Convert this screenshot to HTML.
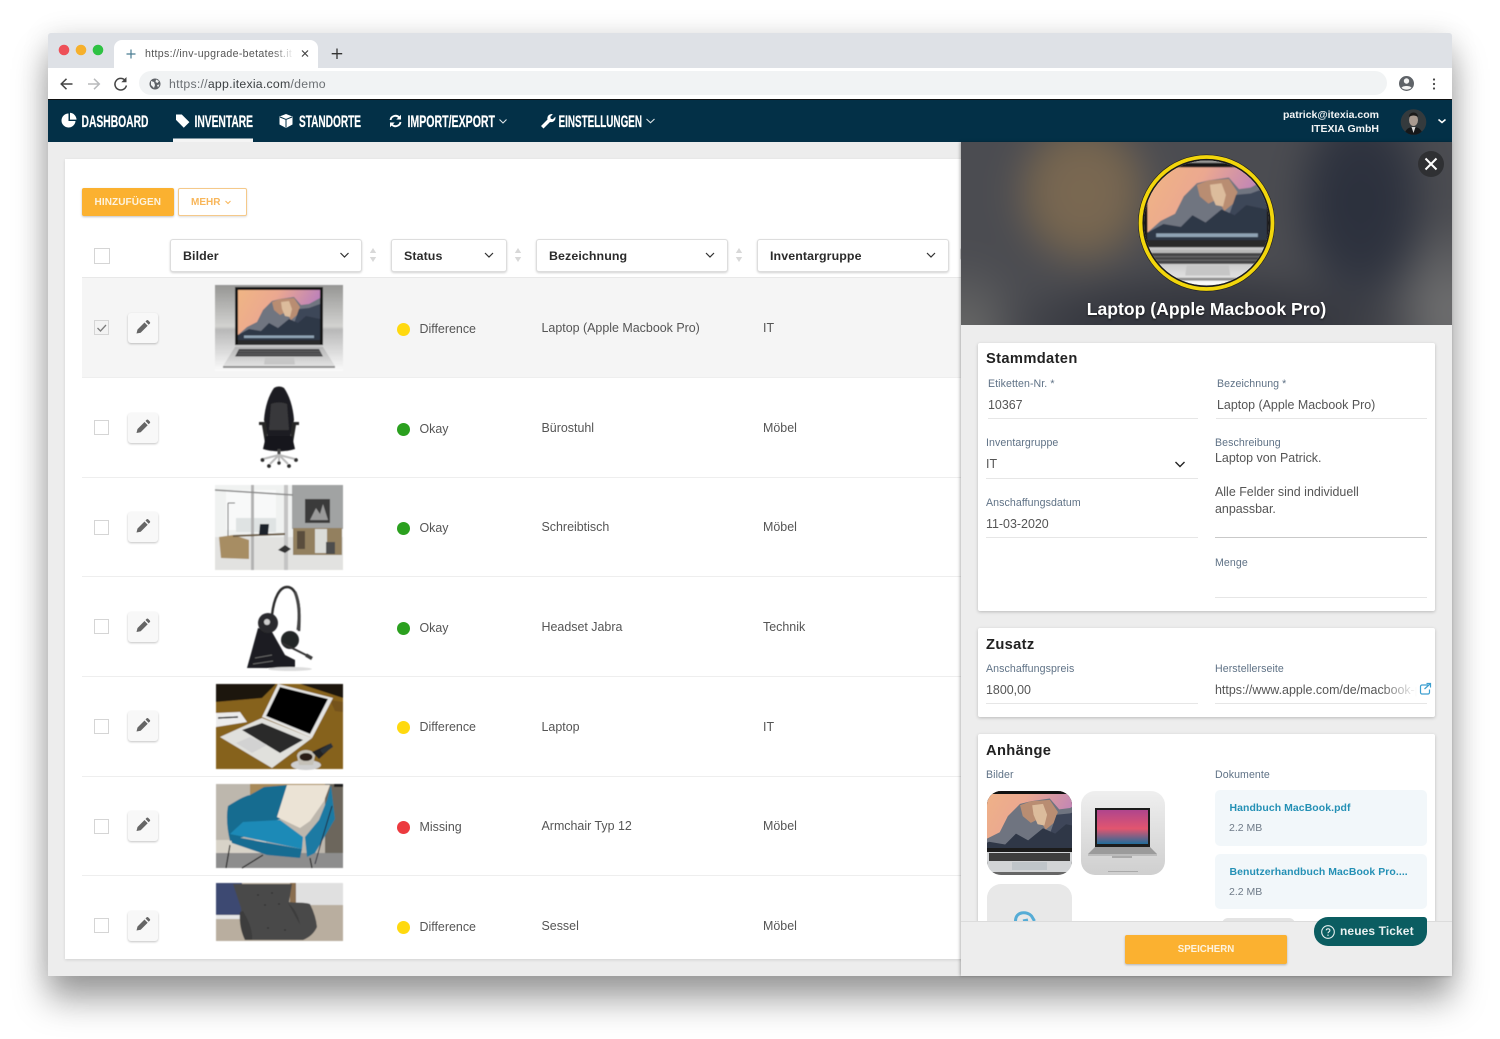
<!DOCTYPE html>
<html lang="de"><head><meta charset="utf-8"><title>ITEXIA</title>
<style>
html,body{margin:0;padding:0;background:#fff;width:1500px;height:1039px;overflow:hidden}
body{position:relative;font-family:"Liberation Sans",sans-serif;color:#4d4d4d}
.a{position:absolute}
.t{position:absolute;white-space:nowrap;line-height:16px;height:16px}
#win{position:absolute;left:48px;top:33px;width:1404px;height:943px;background:#ededed;box-shadow:0 24px 34px rgba(0,0,0,.36),0 2px 28px rgba(0,0,0,.12);border-radius:3px 3px 0 0}
.row{position:absolute;left:82px;width:879px;height:99px;border-bottom:1px solid #eee;box-sizing:border-box}
.cb{position:absolute;left:94px;width:15px;height:15px;border:1px solid #d5d5d5;background:#fff;box-sizing:border-box}
.eb{position:absolute;left:128px;width:30px;height:30px;background:#f8f8f8;border-radius:3px;box-shadow:0 1px 2px rgba(0,0,0,.24)}
.dot{position:absolute;left:396.500px;width:13px;height:13px;border-radius:50%}
.c{font-size:12.450px;color:#555}
.sel{position:absolute;top:238.500px;height:33px;background:#fff;border:1px solid #ddd;border-radius:3px;box-sizing:border-box;box-shadow:0 1px 2px rgba(0,0,0,.18)}
.sel b{position:absolute;left:12px;top:8px;font-size:12.400px;letter-spacing:.1px;color:#2b2b2b;line-height:16px}
.card{position:absolute;left:978px;width:457px;background:#fff;border-radius:2px;box-shadow:0 1px 3px rgba(0,0,0,.22)}
.h{font-weight:bold;color:#222;letter-spacing:.35px}
.l{font-size:10.600px;color:#5f7286;letter-spacing:.08px}
.v{font-size:12.450px;color:#555}
.ln{position:absolute;height:1px;background:#e6e6e6}
.doc{position:absolute;left:1215px;width:212px;background:#f2f7fa;border-radius:5px}
.dn{font-size:10.450px;font-weight:bold;color:#2490b5;letter-spacing:.08px}
.ds{font-size:10.500px;color:#6f7b88}
</style></head><body>
<div id="win"></div>

<!-- browser chrome -->
<div class="a" style="left:48px;top:33px;width:1404px;height:35px;background:#dee1e6;border-radius:3px 3px 0 0"></div>
<div class="a" style="left:48px;top:68px;width:1404px;height:31px;background:#fff"></div>
<div class="a" style="left:139px;top:71px;width:1248px;height:24px;background:#f1f3f4;border-radius:12px"></div>
<div class="a" style="left:114px;top:40px;width:204px;height:28px;background:#fff;border-radius:8px 8px 0 0"></div>
<div class="t" style="left:145px;top:46px;width:147px;overflow:hidden;font-size:10.600px;letter-spacing:.32px;color:#555">https://inv-upgrade-betatest.it</div>
<div class="a" style="left:272px;top:46px;width:22px;height:16px;background:linear-gradient(90deg,rgba(255,255,255,0),#fff)"></div>
<div class="t" style="left:169px;top:76px;font-size:12.300px;letter-spacing:.24px;color:#6b6f73">https://<span style="color:#3c4043">app.itexia.com</span>/demo</div>

<svg class="a" style="left:0;top:0" width="1500" height="142" viewBox="0 0 1500 142" fill="none">
<circle cx="64" cy="50" r="5.300" fill="#ee5058"/><circle cx="81" cy="50" r="5.300" fill="#f6b02c"/><circle cx="98" cy="50" r="5.300" fill="#2ec243"/>
<path d="M131 49.500v9M126.500 54h9" stroke="#4a7d92" stroke-width="1.200"/>
<path d="M302 50.500l6 6M308 50.500l-6 6" stroke="#444" stroke-width="1.200"/>
<path d="M337 48.500v10.500M331.700 53.700h10.500" stroke="#333" stroke-width="1.300"/>
<path d="M72.500 84H61.500M66.500 78.800L61.200 84l5.300 5.200" stroke="#444" stroke-width="1.500"/>
<path d="M88 84H99M94 78.800L99.300 84 94 89.200" stroke="#b8babc" stroke-width="1.500"/>
<path d="M125.200 80.500a5.800 5.800 0 1 0 1.200 5" stroke="#444" stroke-width="1.500"/><path d="M126.500 77v5.200h-5.200z" fill="#444"/>
<circle cx="155" cy="84" r="5.500" fill="#5f6368"/><path d="M151 81l3 1 1 3-1 3-3-3zM156 79.500l3 1.500-1.500 2-2-1zM157 85l2.500-.5-1.500 3z" fill="#f1f3f4"/>
<circle cx="1406.500" cy="83.500" r="7.500" fill="#5f6368"/><circle cx="1406.500" cy="81" r="2.700" fill="#f4f4f4"/><path d="M1401.500 87.700c1.500-2.300 8.500-2.300 10 0-2.500 2.500-7.500 2.500-10 0z" fill="#f4f4f4"/>
<circle cx="1434" cy="79.500" r="1.100" fill="#444"/><circle cx="1434" cy="84" r="1.100" fill="#444"/><circle cx="1434" cy="88.500" r="1.100" fill="#444"/>
<rect x="48" y="99" width="1404" height="43" fill="#033047"/>
<rect x="48" y="99" width="1404" height="1" fill="#111"/>
<rect x="173" y="138.500" width="80" height="3.500" fill="#f4f4f4"/>
<g fill="#fff" stroke="#fff" stroke-width=".25" font-family="Liberation Sans, sans-serif" font-weight="bold" font-size="16.500">
<text x="81.500" y="127" textLength="67" lengthAdjust="spacingAndGlyphs">DASHBOARD</text>
<text x="194.500" y="127" textLength="58.500" lengthAdjust="spacingAndGlyphs">INVENTARE</text>
<text x="299" y="127" textLength="62" lengthAdjust="spacingAndGlyphs">STANDORTE</text>
<text x="407.500" y="127" textLength="87.500" lengthAdjust="spacingAndGlyphs">IMPORT/EXPORT</text>
<text x="558.500" y="127" textLength="83.500" lengthAdjust="spacingAndGlyphs">EINSTELLUNGEN</text>
</g>
<path d="M68.500 113.500a7 7 0 1 0 7 7.500h-7z" fill="#fff"/><path d="M70 112.800a7 7 0 0 1 6.500 6.800H70z" fill="#fff"/>
<path d="M176 114.500h5.800l7.600 7.600-5.600 5.600-7.800-7.800z" fill="#fff"/>
<path d="M286 114l6.500 2.500v8L286 128l-6.500-3.500v-8z" fill="#fff"/><path d="M280 117l6 2.500 6-2.500M286 119.500v8" stroke="#033047" stroke-width="1"/>
<path d="M390.500 120a5 5 0 0 1 8.700-2.500M400.500 122a5 5 0 0 1-8.700 2.500" stroke="#fff" stroke-width="1.900"/><path d="M401 114.800v4.700h-4.700zM390 127.200v-4.700h4.700z" fill="#fff"/>
<path d="M541 126l6.500-6.500a4.300 4.300 0 0 1 5.300-5.300l-2.500 2.500.5 2 2 .5 2.500-2.500a4.300 4.300 0 0 1-5.300 5.300l-6.500 6.500z" fill="#fff"/>
<path d="M499.500 119.500l3.500 3.500 3.500-3.500M646.500 119l4 3.800 4-3.800" stroke="#dfe5e8" stroke-width="1.100"/>
<path d="M1438.500 119.500l3.500 3 3.500-3" stroke="#fff" stroke-width="1.500"/>
<defs><clipPath id="av"><circle cx="1413.500" cy="122" r="12.800"/></clipPath></defs>
<g clip-path="url(#av)"><rect x="1400" y="108" width="27" height="28" fill="#343a3d"/><ellipse cx="1413.500" cy="120" rx="4.500" ry="6" fill="#a89a90"/><path d="M1409 117c0-6 9-6 9 0-3-2-6-2-9 0z" fill="#1a1a1a"/><path d="M1404 136c1-7 5-9 9.500-9s8.500 2 9.500 9z" fill="#151719"/><path d="M1411.500 127h4l-2 6z" fill="#d8d8d8"/></g>
</svg>
<div class="t" style="right:121px;top:106.500px;font-size:10.500px;font-weight:bold;color:#f2f4f5">patrick@itexia.com</div>
<div class="t" style="right:121px;top:120.500px;font-size:10.500px;font-weight:bold;color:#f2f4f5">ITEXIA GmbH</div>

<!-- main card -->
<div class="a" style="left:65px;top:159px;width:900px;height:800px;background:#fff;box-shadow:0 1px 3px rgba(0,0,0,.12)"></div>
<div class="a" style="left:82px;top:187.500px;width:92px;height:28.500px;background:#fbb130;border-radius:2px;box-shadow:0 1px 2px rgba(0,0,0,.25)"></div>
<div class="t" style="left:94.500px;top:195px;font-size:10px;font-weight:bold;color:#fdf3df;letter-spacing:.1px">HINZUFÜGEN</div>
<div class="a" style="left:178px;top:187.500px;width:69px;height:28.500px;background:#fff;border:1px solid #f5c98a;border-radius:2px;box-sizing:border-box;box-shadow:0 1px 2px rgba(0,0,0,.14)"></div>
<div class="t" style="left:191px;top:195px;font-size:10px;font-weight:bold;color:#f8b65a">MEHR</div>

<div class="cb" style="top:247.500px;width:16px;height:16px"></div>
<div class="sel" style="left:170px;width:192px"><b>Bilder</b></div>
<div class="sel" style="left:391px;width:116px"><b>Status</b></div>
<div class="sel" style="left:536px;width:192px"><b>Bezeichnung</b></div>
<div class="sel" style="left:757px;width:192px"><b>Inventargruppe</b></div>

<!-- rows -->
<div class="row" style="top:277px;background:#f5f5f5;border-top:1px solid #e8e8e8;height:101px"></div>
<div class="row" style="top:378px;height:100px"></div>
<div class="row" style="top:478px"></div>
<div class="row" style="top:577px;height:100px"></div>
<div class="row" style="top:677px;height:100px"></div>
<div class="row" style="top:777px"></div>

<div class="cb" style="top:320px;background:#f3f3f3"></div>
<div class="cb" style="top:420px"></div><div class="cb" style="top:519.500px"></div><div class="cb" style="top:619px"></div><div class="cb" style="top:719px"></div><div class="cb" style="top:818.500px"></div><div class="cb" style="top:918px"></div>
<div class="eb" style="top:313px"></div><div class="eb" style="top:413px"></div><div class="eb" style="top:512px"></div><div class="eb" style="top:612px"></div><div class="eb" style="top:711px"></div><div class="eb" style="top:811px"></div><div class="eb" style="top:910.500px"></div>

<div class="dot" style="top:322.500px;background:#ffd90f"></div><div class="t c" style="left:419.500px;top:320.500px">Difference</div>
<div class="dot" style="top:422.500px;background:#2ba01f"></div><div class="t c" style="left:419.500px;top:420.500px">Okay</div>
<div class="dot" style="top:522px;background:#2ba01f"></div><div class="t c" style="left:419.500px;top:520px">Okay</div>
<div class="dot" style="top:621.500px;background:#2ba01f"></div><div class="t c" style="left:419.500px;top:619.500px">Okay</div>
<div class="dot" style="top:721px;background:#ffd90f"></div><div class="t c" style="left:419.500px;top:719px">Difference</div>
<div class="dot" style="top:821px;background:#ec3a3f"></div><div class="t c" style="left:419.500px;top:819px">Missing</div>
<div class="dot" style="top:920.500px;background:#ffd90f"></div><div class="t c" style="left:419.500px;top:918.500px">Difference</div>

<div class="t c" style="left:541.500px;top:320px">Laptop (Apple Macbook Pro)</div><div class="t c" style="left:763px;top:320px">IT</div>
<div class="t c" style="left:541.500px;top:420px">Bürostuhl</div><div class="t c" style="left:763px;top:420px">Möbel</div>
<div class="t c" style="left:541.500px;top:519px">Schreibtisch</div><div class="t c" style="left:763px;top:519px">Möbel</div>
<div class="t c" style="left:541.500px;top:619px">Headset Jabra</div><div class="t c" style="left:763px;top:619px">Technik</div>
<div class="t c" style="left:541.500px;top:718.500px">Laptop</div><div class="t c" style="left:763px;top:718.500px">IT</div>
<div class="t c" style="left:541.500px;top:818px">Armchair Typ 12</div><div class="t c" style="left:763px;top:818px">Möbel</div>
<div class="t c" style="left:541.500px;top:918px">Sessel</div><div class="t c" style="left:763px;top:918px">Möbel</div>

<!-- graphics overlay for left side -->
<svg class="a" style="left:0;top:0" width="961" height="976" viewBox="0 0 961 976" fill="none">
<defs>
<filter id="soft" x="-5%" y="-5%" width="110%" height="110%"><feGaussianBlur stdDeviation=".45"/></filter>
<linearGradient id="bg1" x1="0" y1="0" x2="0" y2="1"><stop offset="0" stop-color="#969694"/><stop offset=".48" stop-color="#d2d2d0"/><stop offset=".52" stop-color="#b8b8b8"/><stop offset="1" stop-color="#fbfbfb"/></linearGradient>
<linearGradient id="sky" x1="0" y1="0" x2="1" y2=".35"><stop offset="0" stop-color="#f0b584"/><stop offset=".45" stop-color="#eba890"/><stop offset="1" stop-color="#b67cc0"/></linearGradient>
<linearGradient id="base" x1="0" y1="0" x2="0" y2="1"><stop offset="0" stop-color="#b5b5b5"/><stop offset="1" stop-color="#e2e2e2"/></linearGradient>
<symbol id="lap" viewBox="0 0 128 86" overflow="visible">
<rect width="128" height="86" fill="url(#bg1)"/>
<path d="M20 2h88v60H20z" fill="#161616"/>
<path d="M23 5h82v50H23z" fill="url(#sky)"/>
<path d="M23 50l9-8 10-5 6-12 9-9 8-2 14-2 7 8 8-1 11-6v40H23z" fill="#6f7480"/>
<path d="M57 17l8-3 14-1 6 9-3 8-6 5-5-8-6 3-6-5z" fill="#b98d72"/>
<path d="M66 17l8-1 3 8-2 8-5-1-3-7z" fill="#dcbc9c"/>
<path d="M84 24l10-1 11-4v28H76z" fill="#3e4659"/>
<path d="M23 50l11-6 12 2 8-8 9 5 11-9 9 4 8-7 14 3v21H23z" fill="#2f3747"/>
<path d="M29 50.500h70v2.500H29z" fill="#8fa3b4"/>
<path d="M23 55h82v5H23z" fill="#2c2c2c"/>
<path d="M20 60h88v2H20z" fill="#c9c9c9"/>
<path d="M20 62h88l12 19H8z" fill="url(#base)"/>
<path d="M24 64h80l4 7.500H20z" fill="#444446"/>
<path d="M24 66.500h81M23 69h83" stroke="#7a7a7a" stroke-width=".5"/>
<path d="M50 72.500h29l1 7H49z" fill="#c6c6c6"/>
<path d="M8 81h112v2H8z" fill="#8f8f8f"/>
</symbol>
</defs>
<!-- select chevrons -->
<g stroke="#333" stroke-width="1.200"><path d="M340.500 253l4 4 4-4M485 253l4 4 4-4M706 253l4 4 4-4M927 253l4 4 4-4"/></g>
<path d="M225.500 201l2.500 2.500 2.500-2.500" stroke="#f8b65a" stroke-width="1"/>
<g fill="#d8d8d8"><path d="M373 248l3.200 5h-6.400zM373 262l3.200-5h-6.400z"/><path d="M518 248l3.200 5h-6.400zM518 262l3.200-5h-6.400z"/><path d="M739 248l3.200 5h-6.400zM739 262l3.200-5h-6.400z"/><path d="M960 248l1 1.600v8.800l-1 1.600z"/></g>
<path d="M97.500 328l3 3 5.500-6" stroke="#7d7d7d" stroke-width="1.300"/>
<!-- pencils -->
<g fill="#666">
<path transform="translate(0 2.500)" d="M136.500 331l1-4 7-7 3.200 3.200-7 7zM145.500 319l1.200-1.200a1 1 0 0 1 1.400 0l1.800 1.800a1 1 0 0 1 0 1.400l-1.200 1.200z"/>
<path transform="translate(0 102)" d="M136.500 331l1-4 7-7 3.200 3.200-7 7zM145.500 319l1.200-1.200a1 1 0 0 1 1.400 0l1.800 1.800a1 1 0 0 1 0 1.400l-1.200 1.200z"/>
<path transform="translate(0 201.500)" d="M136.500 331l1-4 7-7 3.200 3.200-7 7zM145.500 319l1.200-1.200a1 1 0 0 1 1.400 0l1.800 1.800a1 1 0 0 1 0 1.400l-1.200 1.200z"/>
<path transform="translate(0 301)" d="M136.500 331l1-4 7-7 3.200 3.200-7 7zM145.500 319l1.200-1.200a1 1 0 0 1 1.400 0l1.800 1.800a1 1 0 0 1 0 1.400l-1.200 1.200z"/>
<path transform="translate(0 400.500)" d="M136.500 331l1-4 7-7 3.200 3.200-7 7zM145.500 319l1.200-1.200a1 1 0 0 1 1.400 0l1.800 1.800a1 1 0 0 1 0 1.400l-1.200 1.200z"/>
<path transform="translate(0 500)" d="M136.500 331l1-4 7-7 3.200 3.200-7 7zM145.500 319l1.200-1.200a1 1 0 0 1 1.400 0l1.800 1.800a1 1 0 0 1 0 1.400l-1.200 1.200z"/>
<path transform="translate(0 599.500)" d="M136.500 331l1-4 7-7 3.200 3.200-7 7zM145.500 319l1.200-1.200a1 1 0 0 1 1.400 0l1.800 1.800a1 1 0 0 1 0 1.400l-1.200 1.200z"/>
</g>
<g filter="url(#soft)">
<!-- row 1 image -->
<use href="#lap" x="215" y="285" width="128" height="86"/>
<!-- chair -->
<path d="M274 388c3-2 7-2 10 0 5 7 9 18 10 32l-4 18h-22l-4-18c1-14 5-25 10-32z" fill="#1f1f21"/>
<path d="M271 404c4-2 12-2 16 0l2 26h-20z" fill="#38383b"/>
<path d="M266 422h-7v3h3l3 18h3zM292 422h7v3h-3l-3 18h-3z" fill="#262626"/>
<path d="M266 436h26l3 13c-9 3-23 3-32 0z" fill="#18181a"/>
<path d="M277.500 449h3v7h-3z" fill="#444"/>
<path d="M279 455l-16 4M279 455l16 4M279 455l-9 9M279 455l9 9M279 455v7" stroke="#b9b9b9" stroke-width="2"/>
<g fill="#2a2a2a"><circle cx="262.500" cy="460" r="1.900"/><circle cx="296" cy="460" r="1.900"/><circle cx="269" cy="466" r="1.900"/><circle cx="289" cy="466" r="1.900"/><circle cx="279" cy="463" r="1.700"/></g>
<!-- office -->
<rect x="215" y="485" width="128" height="85" fill="#f0f2f1"/>
<rect x="226" y="490" width="50" height="40" fill="#f8f9f9"/>
<rect x="236" y="518" width="40" height="14" fill="#dfe3e3"/>
<rect x="215" y="537" width="128" height="33" fill="#e2e2e0"/>
<rect x="292" y="485" width="51" height="44" fill="#a1a3a3"/>
<rect x="305" y="499" width="25" height="24" fill="#3a3a3a"/><path d="M310 520l6-12 4 6 3-10 5 16z" fill="#9a9a9a"/>
<rect x="293" y="528" width="49" height="27" fill="#93805f"/><rect x="297" y="531" width="8" height="18" fill="#5a4d3c"/><rect x="315" y="529" width="12" height="24" fill="#dbdcd8"/><rect x="326" y="542" width="9" height="12" fill="#4e4e4e"/>
<rect x="251" y="485" width="3" height="85" fill="#b2b2b2"/><rect x="284" y="485" width="4" height="85" fill="#c4c4c4"/>
<path d="M215 490l78 5" stroke="#8a8a8a" stroke-width="1.500"/>
<path d="M228 503v35M228 503h7" stroke="#666" stroke-width="1"/>
<path d="M219 537l14-2 16 5v19l-28-1z" fill="#a78d64"/>
<path d="M233 535l52-2v2l-52 2z" fill="#6a5a42"/>
<path d="M260 524h9l-1 11h-9z" fill="#1f2429"/>
<path d="M278 550l7-5 6 4-6 4z" fill="#333"/>
<!-- headset -->
<path d="M272 615c2-18 8-28 15-28 9 0 14 14 12 44" stroke="#2a2a2c" stroke-width="2.400"/>
<path d="M295 592c4 10 5 24 3 38" stroke="#444" stroke-width="3"/>
<path d="M247 668l5-18 6-22 14 4 13 23 10 5v8z" fill="#1d1e20"/>
<circle cx="268" cy="623" r="10" fill="#2b2c2f"/><circle cx="267" cy="622" r="3" fill="#cfcfcf"/>
<circle cx="290" cy="640" r="9" fill="#242528"/>
<path d="M282 643l28 14" stroke="#333" stroke-width="2"/><path d="M306 655l6 3.500" stroke="#3a3a3a" stroke-width="3.500"/>
<path d="M255 658l17-3M253 664l20-3" stroke="#777" stroke-width=".8"/>
<ellipse cx="290" cy="669" rx="22" ry="2" fill="#ddd"/>
<!-- laptop row 5 -->
<rect x="216" y="684" width="127" height="85" fill="#86621f"/>
<path d="M216 684h60l-14 14-46 4zM300 684h43v14z" fill="#1d170d"/><path d="M330 700l13 2v10l-8-1z" fill="#74521e"/>
<path d="M216 713l24-1 7 10-31 5z" fill="#ececec"/><path d="M218 718l20-1" stroke="#222" stroke-width="1.500"/>
<path d="M278 684l55 14-21 40-50-21z" fill="#e4e4e2"/><path d="M280 687l48 12-18 35-44-18z" fill="#020202"/>
<path d="M220 737l42-19 50 20-40 30z" fill="#e0e0dc"/>
<path d="M242 730l20-7 41 17-23 13z" fill="#2c2c2c"/>
<path d="M236 743l14-6 17 8-15 8z" fill="#d2d2d2"/>
<ellipse cx="306" cy="765" rx="15" ry="5" fill="#cfcfcf"/><path d="M297 756a9 6 0 0 1 18 0l-2 9h-14z" fill="#c5c1b8"/><ellipse cx="306" cy="757" rx="6.500" ry="4" fill="#2b1e12"/>
<path d="M312 752l17-8 4 2-14 13z" fill="#222"/><path d="M320 750l11-7 2 4-10 7z" fill="#2b3038"/>
<!-- armchair -->
<rect x="216" y="784" width="127" height="84" fill="#bdb7ad"/>
<rect x="250" y="784" width="93" height="14" fill="#a88a5a"/>
<rect x="325" y="784" width="18" height="70" fill="#6c665c"/><rect x="334" y="784" width="9" height="3" fill="#1b1b1b"/>
<rect x="216" y="840" width="50" height="14" fill="#d8d3c8"/>
<rect x="216" y="853" width="127" height="15" fill="#8d8d8d"/>
<path d="M228 806c8-5 16-10 22-11l14-8 24-2-8 34-10 4-20 12-20 6c-3-12-4-25-2-35z" fill="#176c90"/>
<path d="M287 785h43l-6 16-14 20-10 7-23-11z" fill="#ebe3d5"/>
<path d="M331 785l4 34-20 34-8 4-2-20 14-17 8-20z" fill="#1a7aa3"/>
<path d="M230 834l13-12 37-2 23 17-1 12z" fill="#1e8ab7"/>
<path d="M230 836l72 13-2 9-33-3-35-12z" fill="#156c92"/>
<path d="M230 845l-4 23M263 855l-21 13M310 858l2 10" stroke="#1b1b1b" stroke-width="1.200"/>
<path d="M332 806l-9 30-8 28" stroke="#223" stroke-width="1"/>
<!-- sessel -->
<rect x="216" y="883" width="127" height="58" fill="#b9ae9f"/>
<rect x="216" y="883" width="26" height="32" fill="#3d4a72"/><rect x="216" y="915" width="28" height="4" fill="#e6e6e6"/>
<rect x="296" y="883" width="47" height="22" fill="#e0e0e0"/><rect x="290" y="883" width="6" height="22" fill="#8a6e50"/>
<path d="M233 884h59l-3 18c6 1 16 0 21 2q6 12 7 23q-4 9-14 13h-51q-11-14-11-32z" fill="#494949"/>
<path d="M243 911c6 10 10 20 9 29h-7c-4-8-6-18-5-28zM288 903q10 8 12 22" fill="#3d3d3d"/>
<g fill="#363636"><circle cx="258" cy="895" r="1"/><circle cx="272" cy="893" r="1"/><circle cx="265" cy="905" r="1"/><circle cx="279" cy="904" r="1"/><circle cx="268" cy="928" r="1"/><circle cx="285" cy="930" r="1"/></g>
</g>
</svg>

<!-- detail panel -->
<div class="a" style="left:961px;top:142px;width:491px;height:834px;background:#ededed;box-shadow:-1px 0 3px rgba(0,0,0,.3)"></div>
<div class="a" style="left:961px;top:142px;width:491px;height:183px;overflow:hidden;background:#4a4b50">
<div class="a" style="left:-40px;top:-40px;width:571px;height:263px;filter:blur(16px);background:
radial-gradient(ellipse 78px 85px at 162px 90px,#7b6952 0%,#776650 55%,rgba(120,102,80,0) 100%),
radial-gradient(ellipse 75px 120px at 440px 100px,#2a2f3c 0%,rgba(42,47,60,.85) 55%,rgba(38,43,56,0) 100%),
radial-gradient(ellipse 220px 60px at 285px 225px,#33353d 0%,rgba(51,53,61,.9) 55%,rgba(51,53,61,0) 100%),
radial-gradient(ellipse 70px 100px at 530px 210px,#747474 0%,rgba(116,116,116,0) 100%),
radial-gradient(ellipse 70px 90px at 40px 240px,#6d6d6b 0%,rgba(109,109,107,0) 100%),
#4b4c51"></div>
</div>
<svg class="a" style="left:961px;top:142px" width="491" height="183" viewBox="961 142 491 183" fill="none">
<defs><clipPath id="cir"><circle cx="1206.500" cy="223" r="62.500"/></clipPath></defs>
<circle cx="1206.500" cy="223" r="68.500" fill="#1c1c1c"/>
<g clip-path="url(#cir)"><rect x="1130" y="150" width="160" height="150" fill="#dedede"/>
<use href="#lap" x="1114" y="160" width="186" height="125" filter="url(#soft)"/></g>
<circle cx="1206.500" cy="223" r="66" stroke="#f2d60c" stroke-width="3.800"/>
<circle cx="1431" cy="164" r="13" fill="#2f3033"/>
<path d="M1425.500 158.500l11 11M1436.500 158.500l-11 11" stroke="#fff" stroke-width="2"/>
</svg>
<div class="a" style="left:961px;top:298px;width:491px;text-align:center;font-size:17.600px;font-weight:bold;color:#fff;line-height:22px;text-shadow:0 1px 2px rgba(0,0,0,.6)">Laptop (Apple Macbook Pro)</div>

<div class="card" style="top:343px;height:268px"></div>
<div class="t h" style="left:986px;top:351px;font-size:14.700px">Stammdaten</div>
<div class="t l" style="left:988px;top:375.500px">Etiketten-Nr. *</div>
<div class="t v" style="left:988px;top:397px">10367</div><div class="ln" style="left:988px;top:418px;width:210px"></div>
<div class="t l" style="left:1217px;top:375.500px">Bezeichnung *</div>
<div class="t v" style="left:1217px;top:397px">Laptop (Apple Macbook Pro)</div><div class="ln" style="left:1216px;top:418px;width:211px"></div>
<div class="t l" style="left:986px;top:435px">Inventargruppe</div>
<div class="t v" style="left:986px;top:456px">IT</div><div class="ln" style="left:986px;top:478px;width:212px"></div>
<div class="t l" style="left:1215px;top:435px">Beschreibung</div>
<div class="t v" style="left:1215px;top:450px">Laptop von Patrick.</div>
<div class="t v" style="left:1215px;top:484px">Alle Felder sind individuell</div>
<div class="t v" style="left:1215px;top:501px">anpassbar.</div>
<div class="ln" style="left:1215px;top:537px;width:212px;background:#c9c9c9"></div>
<div class="t l" style="left:986px;top:494.500px">Anschaffungsdatum</div>
<div class="t v" style="left:986px;top:516px">11-03-2020</div><div class="ln" style="left:986px;top:537px;width:212px"></div>
<div class="t l" style="left:1215px;top:554.500px">Menge</div><div class="ln" style="left:1215px;top:597px;width:212px"></div>

<div class="card" style="top:628px;height:89px"></div>
<div class="t h" style="left:986px;top:637px;font-size:14.700px">Zusatz</div>
<div class="t l" style="left:986px;top:660.500px">Anschaffungspreis</div>
<div class="t v" style="left:986px;top:682px">1800,00</div><div class="ln" style="left:986px;top:703px;width:212px"></div>
<div class="t l" style="left:1215px;top:660.500px">Herstellerseite</div>
<div class="t v" style="left:1215px;top:682px;width:202px;overflow:hidden">https://www.apple.com/de/macbook-pro</div><div class="ln" style="left:1215px;top:703px;width:212px"></div>
<div class="a" style="left:1380px;top:682px;width:37px;height:16px;background:linear-gradient(90deg,rgba(255,255,255,0),#fff)"></div>

<div class="card" style="top:734px;height:200px"></div>
<div class="t h" style="left:986px;top:743px;font-size:14.700px">Anhänge</div>
<div class="t l" style="left:986px;top:767px">Bilder</div>
<div class="t l" style="left:1215px;top:767px">Dokumente</div>

<svg class="a" style="left:970px;top:440px" width="470" height="490" viewBox="970 440 470 490" fill="none">
<defs>
<clipPath id="th1"><rect x="987" y="791" width="85" height="84" rx="14"/></clipPath>
<clipPath id="th2"><rect x="1081" y="791" width="84" height="84" rx="14"/></clipPath>
<linearGradient id="g2" x1="0" y1="0" x2="0" y2="1"><stop offset="0" stop-color="#efefef"/><stop offset="1" stop-color="#cfcfcf"/></linearGradient>
<linearGradient id="pk" x1="0" y1="0" x2="0" y2="1"><stop offset="0" stop-color="#b0458d"/><stop offset=".55" stop-color="#e2556f"/><stop offset="1" stop-color="#216c9a"/></linearGradient>
</defs>
<path d="M1175.500 462l4.500 4.500 4.500-4.500" stroke="#222" stroke-width="1.400"/>
<path d="M1428 685h-6a1.500 1.500 0 0 0-1.500 1.500v6a1.500 1.500 0 0 0 1.500 1.500h6a1.500 1.500 0 0 0 1.500-1.500v-3" stroke="#3d9fd0" stroke-width="1.200"/><path d="M1424.500 689l5.500-5M1426.500 683.500h4v4" stroke="#3d9fd0" stroke-width="1.200"/>
<g clip-path="url(#th1)"><rect x="987" y="791" width="85" height="84" fill="#ddd"/><svg x="970" y="785" width="119" height="80" viewBox="20 2 88 59.200" preserveAspectRatio="none"><use href="#lap" width="128" height="86"/></svg>
<rect x="987" y="791" width="85" height="3" fill="#111"/>
<rect x="987" y="848" width="85" height="27" fill="#d2d4d6"/><rect x="987" y="848" width="85" height="4" fill="#1c1c1c"/><rect x="989" y="853" width="81" height="8" fill="#3e3e3e"/><rect x="1012" y="862" width="35" height="8" fill="#bfc5c9"/><rect x="987" y="872" width="85" height="3" fill="#666"/></g>
<g clip-path="url(#th2)"><rect x="1081" y="791" width="84" height="84" fill="url(#g2)"/>
<rect x="1095" y="808" width="55" height="39" fill="#1c1c1c"/><rect x="1097" y="810" width="51" height="34" fill="url(#pk)"/>
<path d="M1095 847h55l7 7h-69z" fill="#9b9b9b"/><path d="M1088 854h69v2h-69z" fill="#bcbcbc"/><rect x="1112" y="856" width="20" height="2" fill="#aaa"/><rect x="1108" y="871" width="30" height="1" fill="#aaa"/></g>
<path d="M987 921v-23a14 14 0 0 1 14-14h57a14 14 0 0 1 14 14v23z" fill="#e8e8e8"/>
<path d="M1015.500 921c0-10 12-10 16-5l3 5M1023 921l5-1" stroke="#55acd6" stroke-width="3"/>
</svg>

<div class="doc" style="top:790px;height:56px"></div>
<div class="t dn" style="left:1229.500px;top:800.500px">Handbuch MacBook.pdf</div>
<div class="t ds" style="left:1229px;top:820px">2.2 MB</div>
<div class="doc" style="top:854px;height:55px"></div>
<div class="t dn" style="left:1229.500px;top:864.500px">Benutzerhandbuch MacBook Pro....</div>
<div class="t ds" style="left:1229px;top:884px">2.2 MB</div>
<div class="a" style="left:1222px;top:918px;width:73px;height:6px;background:#e4e4e4;border-radius:6px 6px 0 0"></div>

<!-- footer -->
<div class="a" style="left:961px;top:921px;width:491px;height:55px;background:#ededed;border-top:1px solid #dcdcdc;box-sizing:border-box"></div>
<div class="a" style="left:1125px;top:935px;width:162px;height:28.500px;background:#fbb130;border-radius:2px;box-shadow:0 1px 2px rgba(0,0,0,.25)"></div>
<div class="a" style="left:1125px;top:942px;width:162px;text-align:center;font-size:9.700px;line-height:16px;font-weight:bold;color:#fdf3df">SPEICHERN</div>
<div class="a" style="left:1314px;top:917px;width:113px;height:29px;background:#0b5d61;border-radius:14px 3px 14px 14px"></div>
<svg class="a" style="left:1320px;top:924px" width="16" height="16" viewBox="0 0 16 16" fill="none"><circle cx="8" cy="8" r="6.300" stroke="#e8f0f0" stroke-width="1.100"/><path d="M6.200 6.300c.2-2.100 3.700-2 3.700.1 0 1.400-1.900 1.400-1.900 2.800" stroke="#e8f0f0" stroke-width="1.100"/><circle cx="8" cy="11.200" r=".7" fill="#e8f0f0"/></svg>
<div class="t" style="left:1340px;top:923px;font-size:12px;font-weight:bold;color:#e9f1f1;letter-spacing:.1px">neues Ticket</div>
</body></html>
